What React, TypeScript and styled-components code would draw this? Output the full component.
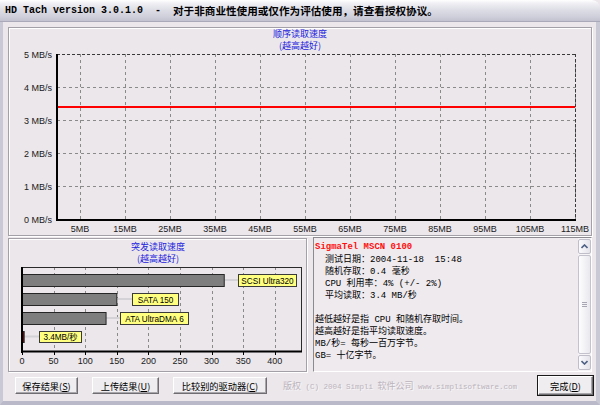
import React from 'react';
import styled, { createGlobalStyle } from 'styled-components';

const GlobalStyle = createGlobalStyle`
  html, body {
    margin: 0;
    padding: 0;
    background: #ebe7eb;
  }
  body {
    font-family: "Noto Sans CJK SC", sans-serif;
  }
`;

// ---- data ----
const seqTicks = [5, 15, 25, 35, 45, 55, 65, 75, 85, 95, 105, 115];
const seqLevels = [5, 4, 3, 2, 1, 0];
const mbX = (mb: number) => 57.5 + mb * 4.5;
const mbsY = (v: number) => 219 - v * 33;

const burstX = (v: number) => 22 + v * 0.632;
const burstTicks = [0, 50, 100, 150, 200, 250, 300, 350, 400];
const bursts = [
  { label: 'SCSI Ultra320', value: 320, y: 275, h: 12, lx: 238, lw: 58, fill: '#7e7e7e' },
  { label: 'SATA 150', value: 150, y: 294, h: 12, lx: 132, lw: 46, fill: '#7e7e7e' },
  { label: 'ATA UltraDMA 6', value: 133, y: 313, h: 12, lx: 120, lw: 68, fill: '#7e7e7e' },
  { label: '3.4MB/秒', value: 3.4, y: 332, h: 11, lx: 39, lw: 42, fill: '#7a0000' },
];

// ---- window chrome ----
const Window = styled.div`
  width: 600px;
  height: 405px;
  display: flex;
  flex-direction: column;
  overflow: hidden;
  border-top-right-radius: 8px;
  background: #ebe7eb;
`;

const TitleBar = styled.div`
  height: 22px;
  flex: none;
  display: flex;
  align-items: center;
  padding-left: 5px;
  box-sizing: border-box;
  white-space: pre;
  font-weight: bold;
  color: #000;
  background: linear-gradient(#ffffff 0%, #eeeef3 18%, #dcdce5 50%, #cfcfdb 80%, #c2c2d0 100%);
  border-top-right-radius: 8px;
  border-bottom: 1px solid #a9a9ba;
`;

const TitleLatin = styled.span`
  font-family: "Liberation Mono", monospace;
  font-size: 10px;
`;

const TitleCjk = styled.span`
  font-family: "Noto Sans CJK SC", sans-serif;
  font-size: 10.6px;
`;

const Frame = styled.div`
  flex: 1;
  display: flex;
  flex-direction: column;
  padding: 5px 0 0 5px;
  border-left: 3px solid #c9c9d6;
  border-right: 4px solid #c9c9d6;
  border-bottom: 4px solid #b9b9c9;
`;

const Panel = styled.div<{ $w: number; $h: number }>`
  width: ${p => p.$w}px;
  height: ${p => p.$h}px;
  box-sizing: border-box;
  border: 1px solid #a3a1a7;
  box-shadow: inset 1px 1px 0 #ffffff, 1px 1px 0 #ffffff;
  flex: none;
`;

const LowerRow = styled.div`
  display: flex;
  gap: 6px;
  margin-top: 2px;
  height: 134px;
`;

// ---- info box ----
const InfoBox = styled.div`
  width: 279px;
  height: 135px;
  box-sizing: border-box;
  display: flex;
  border: 1px solid;
  border-color: #8c8a90 #ffffff #ffffff #8c8a90;
  background: #eeeaee;
  margin-top: -1px;
`;

const InfoText = styled.div`
  flex: 1;
  padding: 3px 0 0 1px;
  font-size: 9px;
  line-height: 12px;
  color: #000;
  white-space: pre;
`;

const Line = styled.div<{ $indent?: boolean }>`
  height: 12px;
  padding-left: ${p => (p.$indent ? 10 : 0)}px;
`;

const DriveName = styled.div`
  height: 12px;
  font-family: "Liberation Mono", monospace;
  font-size: 9px;
  font-weight: bold;
  color: #ff1010;
`;

const M = styled.span<{ $size?: number }>`
  font-family: "Liberation Mono", monospace;
  font-size: ${p => p.$size ?? 9}px;
`;

const ScrollBar = styled.div`
  width: 13px;
  display: flex;
  flex-direction: column;
  background: #f6f4f6;
  padding: 1px 0;
  gap: 1px;
`;

const ScrollButton = styled.div`
  height: 15px;
  flex: none;
  display: flex;
  align-items: center;
  justify-content: center;
  box-sizing: border-box;
  border: 1px solid #c0bec8;
  border-radius: 2px;
  background: linear-gradient(90deg, #fbfbfd, #e4e3ea);
`;

const Thumb = styled.div`
  flex: 1;
  box-sizing: border-box;
  border: 1px solid #c4c2cc;
  border-radius: 2px;
  background: linear-gradient(90deg, #fdfdfe, #e9e8ee);
  display: flex;
  align-items: center;
  justify-content: center;
`;

const Grip = styled.div`
  width: 5px;
  height: 6px;
  background: repeating-linear-gradient(#a8a6b2 0 1px, transparent 1px 2px);
`;

// ---- buttons ----
const ButtonRow = styled.div`
  display: flex;
  align-items: center;
  gap: 14px;
  margin-top: 4px;
  height: 19px;
  padding-left: 7px;
`;

const Button = styled.div<{ $w: number; $default?: boolean }>`
  width: ${p => p.$w}px;
  height: ${p => (p.$default ? 19 : 17)}px;
  box-sizing: border-box;
  display: flex;
  align-items: center;
  justify-content: center;
  font-size: 9.2px;
  color: #000;
  background: #efedef;
  border: 1px solid;
  border-color: #ffffff #6f6d72 #6f6d72 #ffffff;
  box-shadow: ${p => (p.$default ? '0 0 0 1px #1a1a1a, inset -1px -1px 0 #a8a6aa' : 'inset -1px -1px 0 #a8a6aa')};
  u {
    text-decoration: underline;
  }
  ${p => (p.$default ? 'margin-left: auto; margin-right: 3px;' : '')}
`;

const Copyright = styled.div`
  margin-left: 2px;
  font-size: 9px;
  color: #bcb4bc;
  white-space: pre;
  text-shadow: 1px 1px 0 #f8f6f8;
`;

// ---- charts ----
const titleFont = { fontSize: 9, fill: '#2222dd', fontFamily: 'Noto Sans CJK SC' };
const axisFont = { fontSize: 9, fill: '#202020', fontFamily: 'Liberation Sans' };

const SeqChart = () => (
  <svg width={582} height={207} viewBox="9 28 582 207" style={{ display: 'block' }}>
    <text x={300} y={37} textAnchor="middle" {...titleFont}>顺序读取速度</text>
    <text x={300} y={49} textAnchor="middle" {...titleFont}>(越高越好)</text>
    {seqTicks.map(mb => (
      <line key={mb} x1={Math.round(mbX(mb)) + 0.5} x2={Math.round(mbX(mb)) + 0.5} y1={54} y2={219} stroke="#8a8a8a" strokeDasharray="3 3" />
    ))}
    {seqLevels.slice(1, 5).map(v => (
      <line key={v} x1={57} x2={576} y1={mbsY(v) + 0.5} y2={mbsY(v) + 0.5} stroke="#8a8a8a" strokeDasharray="3 3" />
    ))}
    <line x1={57} x2={576} y1={54.5} y2={54.5} stroke="#3a3a3a" strokeDasharray="3 2" />
    <line x1={575.5} x2={575.5} y1={54} y2={219} stroke="#3a3a3a" strokeDasharray="3 2" />
    <line x1={58} x2={575} y1={107} y2={107} stroke="#ff0000" strokeWidth={2} />
    <line x1={57} x2={57} y1={54} y2={221} stroke="#000" strokeWidth={2} />
    <line x1={56} x2={576} y1={220} y2={220} stroke="#000" strokeWidth={2} />
    {seqLevels.map(v => (
      <text key={v} x={52} y={mbsY(v) + 3.5} textAnchor="end" {...axisFont}>{v} MB/s</text>
    ))}
    {seqTicks.map(mb => (
      <text key={mb} x={mbX(mb)} y={232} textAnchor="middle" {...axisFont}>{mb}MB</text>
    ))}
  </svg>
);

const BurstChart = () => (
  <svg width={297} height={132} viewBox="9 240 297 132" style={{ display: 'block' }}>
    <text x={158} y={251} textAnchor="middle" {...titleFont}>突发读取速度</text>
    <text x={158} y={263} textAnchor="middle" {...titleFont}>(越高越好)</text>
    {burstTicks.slice(1).map(v => (
      <line key={v} x1={Math.round(burstX(v)) + 0.5} x2={Math.round(burstX(v)) + 0.5} y1={268} y2={352} stroke="#8a8a8a" strokeDasharray="3 3" />
    ))}
    <line x1={22} x2={301} y1={268.5} y2={268.5} stroke="#2a2a2a" />
    <line x1={301.5} x2={301.5} y1={268} y2={352} stroke="#2a2a2a" />
    {bursts.map(b => {
      const end = burstX(b.value);
      const mid = b.y + b.h / 2;
      return (
        <g key={b.label}>
          <line x1={end} x2={b.lx} y1={mid} y2={mid} stroke="#d4d2d6" strokeWidth={2} />
          <rect x={22} y={b.y + 0.5} width={end - 22} height={b.h} fill={b.fill} stroke="#262626" />
          <rect x={b.lx + 0.5} y={b.y + 0.5} width={b.lw} height={b.h} fill="#ffff80" stroke="#3a3a3a" />
          <text x={b.lx + b.lw / 2 + 0.5} y={mid + 3.5} textAnchor="middle" fontSize={8.2} fill="#000" fontFamily="Liberation Sans, Noto Sans CJK SC">{b.label}</text>
        </g>
      );
    })}
    <line x1={22} x2={22} y1={268} y2={354} stroke="#000" strokeWidth={2} />
    <line x1={21} x2={302} y1={352.5} y2={352.5} stroke="#000" strokeWidth={2} />
    {burstTicks.map(v => (
      <g key={v}>
        <line x1={Math.round(burstX(v)) + 0.5} x2={Math.round(burstX(v)) + 0.5} y1={353} y2={356} stroke="#000" />
        <text x={burstX(v)} y={365} textAnchor="middle" {...axisFont}>{v}</text>
      </g>
    ))}
  </svg>
);

const Chevron = ({ up }: { up?: boolean }) => (
  <svg width={7} height={5} viewBox="0 0 7 5">
    <path d={up ? 'M0.5 4 L3.5 1 L6.5 4' : 'M0.5 1 L3.5 4 L6.5 1'} fill="none" stroke="#4d6185" strokeWidth={1.6} />
  </svg>
);

export default function App() {
  return (
    <>
      <GlobalStyle />
      <Window>
        <TitleBar>
          <TitleLatin>HD Tach version 3.0.1.0  -  </TitleLatin>
          <TitleCjk>对于非商业性使用或仅作为评估使用，请查看授权协议。</TitleCjk>
        </TitleBar>
        <Frame>
          <Panel $w={584} $h={209}>
            <SeqChart />
          </Panel>
          <LowerRow>
            <Panel $w={299} $h={134}>
              <BurstChart />
            </Panel>
            <InfoBox>
              <InfoText>
                <DriveName>SigmaTel MSCN 0100</DriveName>
                <Line $indent>测试日期：<M>2004-11-18  15:48</M></Line>
                <Line $indent>随机存取：<M>0.4 </M>毫秒</Line>
                <Line $indent><M>CPU </M>利用率：<M>4% (+/- 2%)</M></Line>
                <Line $indent>平均读取：<M>3.4 MB/</M>秒</Line>
                <Line />
                <Line>越低越好是指<M> CPU </M>和随机存取时间。</Line>
                <Line>越高越好是指平均读取速度。</Line>
                <Line><M>MB/</M>秒<M>= </M>每秒一百万字节。</Line>
                <Line><M>GB= </M>十亿字节。</Line>
              </InfoText>
              <ScrollBar>
                <ScrollButton><Chevron up /></ScrollButton>
                <Thumb><Grip /></Thumb>
                <ScrollButton><Chevron /></ScrollButton>
              </ScrollBar>
            </InfoBox>
          </LowerRow>
          <ButtonRow>
            <Button $w={63}>保存结果(<u>S</u>)</Button>
            <Button $w={67}>上传结果(<u>U</u>)</Button>
            <Button $w={94}>比较别的驱动器(<u>C</u>)</Button>
            <Copyright>
              版权<M $size={7.5}> (C) 2004 Simpli </M>软件公司<M $size={7.5}> www.simplisoftware.com</M>
            </Copyright>
            <Button $w={55} $default>完成(<u>D</u>)</Button>
          </ButtonRow>
        </Frame>
      </Window>
    </>
  );
}
